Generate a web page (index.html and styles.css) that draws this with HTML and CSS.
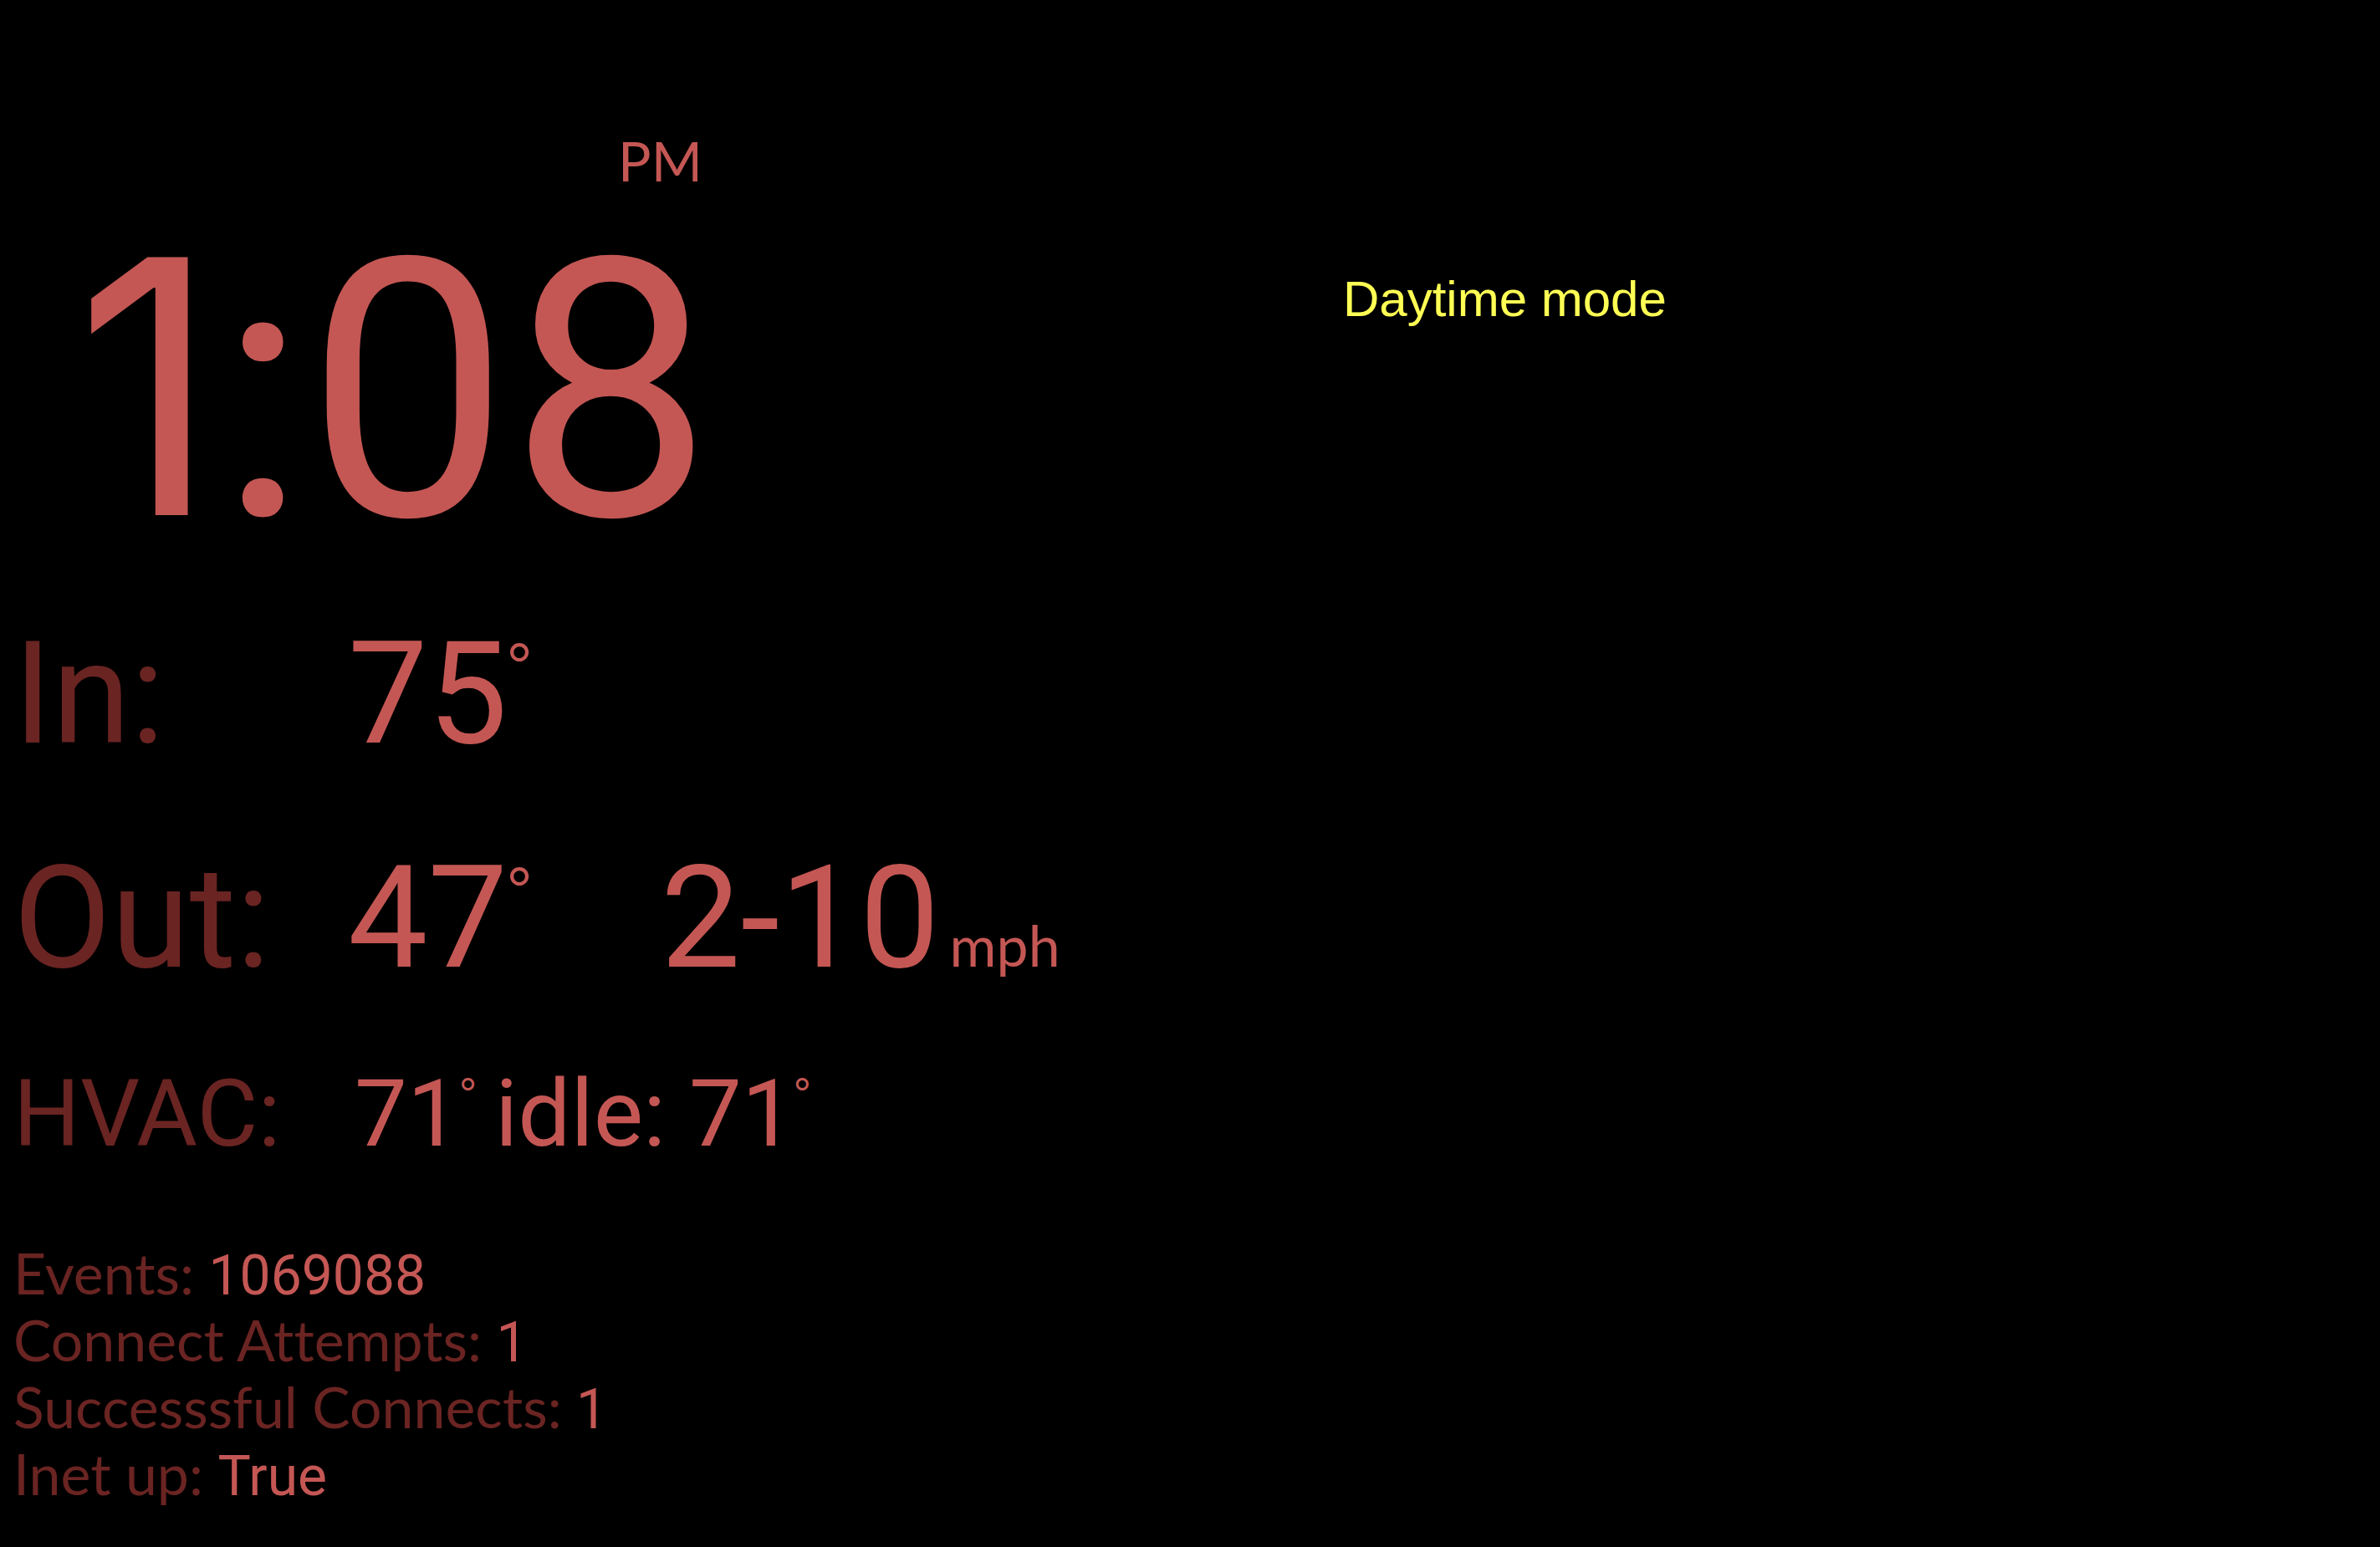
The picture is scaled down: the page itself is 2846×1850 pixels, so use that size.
FILE: index.html
```html
<!DOCTYPE html>
<html lang="en">
<head>
<meta charset="utf-8">
<title>Home status</title>
<link rel="stylesheet" href="styles.css">
</head>
<body>
<main class="dashboard">
  <section class="status">
    <div class="clock">
      <div class="meridiem">PM</div>
      <time class="time" datetime="13:08"><span class="hour">1</span>:08</time>
    </div>
    <dl class="readings">
      <div class="row"><dt>In:</dt><dd>75<span class="degree">°</span></dd></div>
      <div class="row"><dt>Out:</dt><dd>47<span class="degree">°</span></dd><dd>2-10<span class="unit">mph</span></dd></div>
      <div class="row hvac"><dt>HVAC:</dt><dd>71<span class="degree">°</span></dd><dd>idle: 71<span class="degree">°</span></dd></div>
    </dl>
    <dl class="stats">
      <div><dt>Events:</dt> <dd>1069088</dd></div>
      <div><dt>Connect Attempts:</dt> <dd>1</dd></div>
      <div><dt>Successsful Connects:</dt> <dd>1</dd></div>
      <div><dt>Inet up:</dt> <dd>True</dd></div>
    </dl>
  </section>
  <p class="mode">Daytime mode</p>
</main>
</body>
</html>
```
FILE: styles.css
```css
* { box-sizing: border-box; }
body { margin: 0; background: #000; color: #c45754; font-family: Roboto, sans-serif; }
dl, dd, p { margin: 0; }
.dashboard { display: grid; grid-template-columns: 1606fr 1240fr; min-height: 100vh; }
.status { padding: 156px 16px 0; }
.clock { display: flex; flex-direction: column; gap: 12px; width: 836px; text-align: right; }
.meridiem { padding-right: 12px; font: 66px/72px Lato, sans-serif; }
.time { font-size: 432px; line-height: 456px; }
.hour { font: 424px/1 Inter, sans-serif; }
.readings { display: flex; flex-direction: column; gap: 64px; margin-top: 32px; }
.row { display: grid; grid-template-columns: 400px 374px 1fr; align-items: baseline; font-size: 170px; line-height: 204px; }
dt { color: #6a2422; }
.hvac { grid-template-columns: 408px 168px 1fr; font-size: 112px; line-height: 136px; }
.degree { font: 68px/0 Lato, sans-serif; vertical-align: 70px; }
.hvac .degree { font-size: 46px; vertical-align: 47px; }
.unit { margin-left: 12px; font: 68px/72px Lato, sans-serif; }
.stats { margin-top: 82px; font: 68px/80px Lato, sans-serif; font-variant-ligatures: none; }
.stats dt, .stats dd { display: inline; }
.stats dd { font: 66px/64px Roboto, sans-serif; }
.mode { padding-top: 320px; color: #ffff54; font: 60px/76px "Liberation Sans", sans-serif; }
```
